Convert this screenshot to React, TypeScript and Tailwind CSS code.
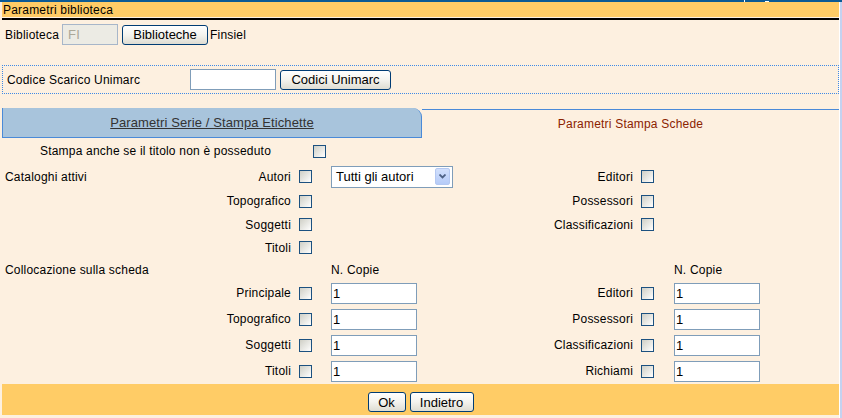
import React from 'react';

const font = { fontFamily: '"Liberation Sans", Arial, sans-serif' };

function XpButton({ children, w }: { children: React.ReactNode; w: string }) {
  return (
    <button
      className={`${w} h-[20px] shrink-0 rounded-[3px] border border-[#003c74] bg-linear-to-b from-white via-[#f4f3ee] to-[#dedcd2] text-[13px] leading-none tracking-normal text-black`}
    >
      {children}
    </button>
  );
}

function Check({ className = '' }: { className?: string }) {
  return (
    <span
      className={`block h-[13px] w-[13px] shrink-0 border border-[#1c5180] bg-linear-to-br from-[#cfcfc6] to-white ${className}`}
    />
  );
}

function Copies() {
  return (
    <div className="flex h-[21px] w-[86px] items-center border border-[#7f9db9] bg-white pl-[1px] text-[13px] leading-none text-black">
      1
    </div>
  );
}

function Row({
  h,
  left,
  label,
  check = true,
  mid,
  rLabel,
  rCheck = true,
  right,
}: {
  h: string;
  left?: string;
  label?: string;
  check?: boolean;
  mid?: React.ReactNode;
  rLabel?: string;
  rCheck?: boolean;
  right?: React.ReactNode;
}) {
  return (
    <div className={`flex ${h} items-center`}>
      <div className="flex w-[289px] shrink-0 justify-between pl-[3px]">
        <span>{left}</span>
        <span>{label}</span>
      </div>
      {check ? <Check className="ml-[8px]" /> : <span className="ml-[8px] w-[13px] shrink-0" />}
      <div className="ml-[19px] w-[122px] shrink-0">{mid}</div>
      <div className="w-[180px] shrink-0 text-right">{rLabel}</div>
      {rCheck ? <Check className="ml-[8px]" /> : <span className="ml-[8px] w-[13px] shrink-0" />}
      <div className="ml-[20px]">{right}</div>
    </div>
  );
}

export default function App() {
  return (
    <div
      className="flex h-[418px] w-[842px] flex-col overflow-hidden bg-[#fdf0e0] text-[12px] leading-none tracking-[0.2px] text-black"
      style={font}
    >
      {/* top window strip */}
      <div className="flex h-[2px] shrink-0 bg-[#0b5a94]">
        <span className="ml-[744px] w-[1px] bg-white" />
        <span className="ml-[20px] mt-[1px] h-[1px] w-[4px] bg-white" />
      </div>

      <div className="flex flex-1">
        <div className="flex w-[839px] shrink-0 flex-col pl-[2px]">
          {/* header */}
          <div className="flex h-[15px] items-center bg-[#ffcc66] pl-[1px]">Parametri biblioteca</div>
          <div className="mt-[1px] h-[2px] bg-black" />

          {/* biblioteca */}
          <div className="mt-[4px] flex h-[21px] items-center pl-[3px]">
            <span>Biblioteca</span>
            <div className="ml-[3px] flex h-[21px] w-[56px] items-center border border-[#a7b6c9] bg-[#ecebe4] pl-[5px] text-[13px] text-[#aca899]">
              FI
            </div>
            <div className="ml-[4px]">
              <XpButton w="w-[86px]">Biblioteche</XpButton>
            </div>
            <span className="ml-[2px]">Finsiel</span>
          </div>

          {/* codice scarico */}
          <div className="mt-[20px] flex h-[29px] items-center border border-dotted border-[#3f8ae6]">
            <span className="w-[187px] shrink-0 pl-[4px]">Codice Scarico Unimarc</span>
            <div className="h-[21px] w-[86px] border border-[#7f9db9] bg-white" />
            <div className="ml-[4px]">
              <XpButton w="w-[111px]">Codici Unimarc</XpButton>
            </div>
          </div>

          {/* tabs */}
          <div className="mt-[14px] flex h-[30px]">
            <div className="flex w-[420px] shrink-0 items-center justify-center rounded-tr-[9px] border-b border-l border-r border-[#4a8ad8] bg-[#a8c4dc] text-[13px] tracking-[0.1px] text-[#333333] underline">
              Parametri Serie / Stampa Etichette
            </div>
            <div className="mt-[1px] flex flex-1 items-center justify-center border-t border-[#4a8ad8] text-[#8b2200]">
              Parametri Stampa Schede
            </div>
          </div>

          {/* stampa anche */}
          <div className="flex h-[26px] items-center">
            <span className="w-[311px] shrink-0 pl-[38px]">Stampa anche se il titolo non è posseduto</span>
            <Check />
          </div>

          {/* cataloghi attivi */}
          <Row
            h="h-[25px]"
            left="Cataloghi attivi"
            label="Autori"
            mid={
              <div className="flex h-[22px] w-[122px] items-center justify-between border border-[#7f9db9] bg-white pl-[4px] pr-[2px] text-[13px] tracking-normal">
                <span>Tutti gli autori</span>
                <span className="flex h-[17px] w-[15px] items-center justify-center rounded-[2px] border border-[#b4c8f2] bg-linear-to-b from-[#d2e0fc] to-[#b5cbf8]">
                  <svg width="7" height="5" viewBox="0 0 7 5">
                    <path d="M0.5 0.5 L3.5 3.5 L6.5 0.5" stroke="#4d6185" strokeWidth="1.8" fill="none" />
                  </svg>
                </span>
              </div>
            }
            rLabel="Editori"
          />
          <Row h="h-[24px]" label="Topografico" rLabel="Possessori" />
          <Row h="h-[23px]" label="Soggetti" rLabel="Classificazioni" />
          <Row h="h-[23px]" label="Titoli" rCheck={false} />

          {/* collocazione */}
          <Row
            h="h-[21px]"
            left="Collocazione sulla scheda"
            check={false}
            mid={<span>N. Copie</span>}
            rCheck={false}
            right={<span>N. Copie</span>}
          />
          <Row h="h-[26px]" label="Principale" mid={<Copies />} rLabel="Editori" right={<Copies />} />
          <Row h="h-[26px]" label="Topografico" mid={<Copies />} rLabel="Possessori" right={<Copies />} />
          <Row h="h-[26px]" label="Soggetti" mid={<Copies />} rLabel="Classificazioni" right={<Copies />} />
          <Row h="h-[26px]" label="Titoli" mid={<Copies />} rLabel="Richiami" right={<Copies />} />

          {/* footer */}
          <div className="flex h-[31px] items-start justify-center gap-[4px] bg-[#ffcc66] pt-[8px]">
            <XpButton w="w-[38px]">Ok</XpButton>
            <XpButton w="w-[64px]">Indietro</XpButton>
          </div>
        </div>
        <div className="w-[1px] bg-white" />
        <div className="w-[2px] bg-[#c4d2f0]" />
      </div>
    </div>
  );
}
